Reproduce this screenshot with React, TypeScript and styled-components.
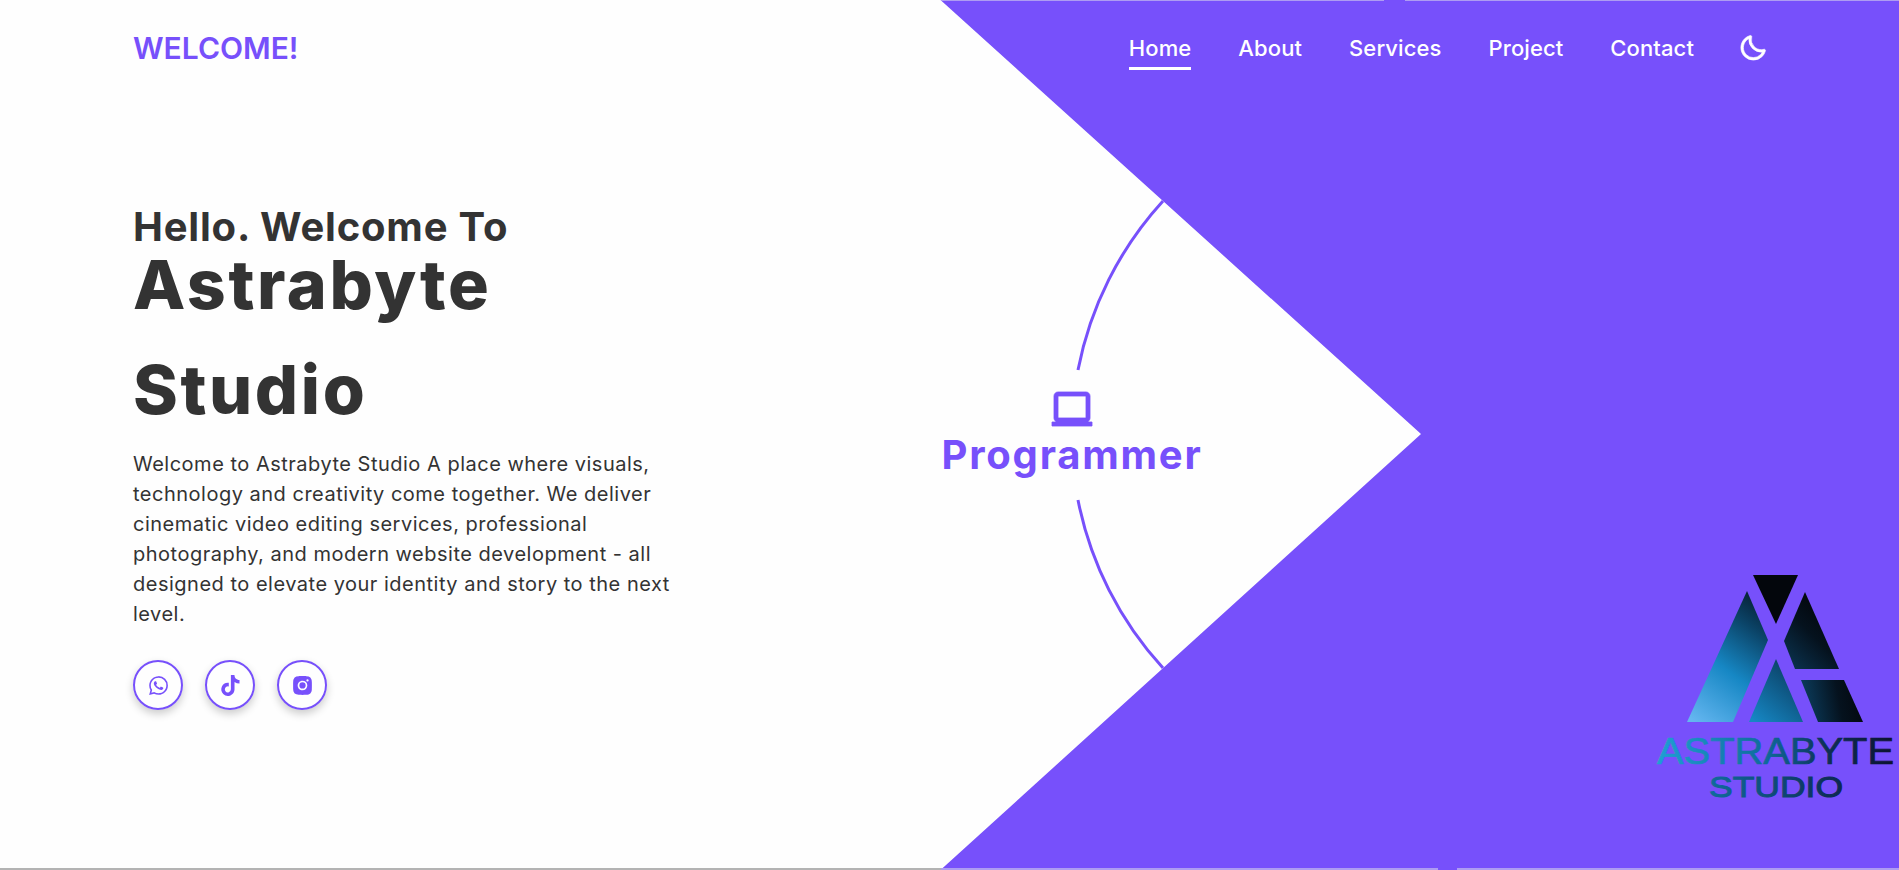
import styled, { createGlobalStyle } from 'styled-components';
import { BiLaptop, BiLogoInstagramAlt, BiLogoTiktok, BiLogoWhatsapp, BiMoon } from 'react-icons/bi';

const PURPLE = '#7750fb';
const TEXT = '#333333';

const NAV_ITEMS = ['Home', 'About', 'Services', 'Project', 'Contact'];

const GlobalStyle = createGlobalStyle`
    * {
        box-sizing: border-box;
    }

    body {
        margin: 0;
        font-family: Inter, 'Noto Sans', sans-serif;
        color: ${TEXT};
        background: #fefefe;
    }
`;

const App = () => {
    return (
        <Page>
            <GlobalStyle />
            <Shape />
            <Ring viewBox="0 0 1899 870">
                <path d="M1163 201 A348 348 0 0 0 1078 370" />
                <path d="M1078 500 A348 348 0 0 0 1163 668" />
            </Ring>

            <Header>
                <Brand>WELCOME!</Brand>
                <Nav>
                    {NAV_ITEMS.map((item) => (
                        <NavLink key={item} active={item === 'Home'}>
                            {item}
                        </NavLink>
                    ))}
                    <Moon />
                </Nav>
            </Header>

            <Hero>
                <Intro>
                    <Greeting>Hello. Welcome To</Greeting>
                    <Title>
                        Astrabyte
                        <br />
                        Studio
                    </Title>
                    <Description>
                        Welcome to Astrabyte Studio A place where visuals, technology and creativity come together. We
                        deliver cinematic video editing services, professional photography, and modern website
                        development - all designed to elevate your identity and story to the next level.
                    </Description>
                    <Socials>
                        <Social>
                            <BiLogoWhatsapp />
                        </Social>
                        <Social>
                            <BiLogoTiktok />
                        </Social>
                        <Social>
                            <BiLogoInstagramAlt />
                        </Social>
                    </Socials>
                </Intro>
                <Role>
                    <RoleIcon />
                    <RoleName>Programmer</RoleName>
                </Role>
            </Hero>

            <Logo viewBox="1650 565 249 245">
                <defs>
                    <linearGradient id="lightBlue" gradientUnits="userSpaceOnUse" x1="1695" y1="722" x2="1785" y2="600">
                        <stop offset="0" stopColor="#64b6f0" />
                        <stop offset="0.4" stopColor="#1687c4" />
                        <stop offset="0.72" stopColor="#0b4468" />
                        <stop offset="1" stopColor="#04101c" />
                    </linearGradient>
                    <linearGradient id="midBlue" gradientUnits="userSpaceOnUse" x1="1755" y1="722" x2="1800" y2="670">
                        <stop offset="0" stopColor="#1687c4" />
                        <stop offset="1" stopColor="#0a3d60" />
                    </linearGradient>
                    <linearGradient id="darkBlue" gradientUnits="userSpaceOnUse" x1="1785" y1="680" x2="1845" y2="620">
                        <stop offset="0" stopColor="#0c3d5e" />
                        <stop offset="0.6" stopColor="#05121e" />
                        <stop offset="1" stopColor="#020408" />
                    </linearGradient>
                    <linearGradient id="cornerBlue" gradientUnits="userSpaceOnUse" x1="1805" y1="700" x2="1860" y2="690">
                        <stop offset="0" stopColor="#0b3a59" />
                        <stop offset="0.6" stopColor="#05121e" />
                        <stop offset="1" stopColor="#03080f" />
                    </linearGradient>
                    <linearGradient id="wordTop" gradientUnits="userSpaceOnUse" x1="1657" y1="750" x2="1894" y2="750">
                        <stop offset="0" stopColor="#1f9fd4" />
                        <stop offset="0.45" stopColor="#0f6c9c" />
                        <stop offset="0.72" stopColor="#0d2f55" />
                        <stop offset="1" stopColor="#0c1230" />
                    </linearGradient>
                    <linearGradient id="wordBottom" gradientUnits="userSpaceOnUse" x1="1709" y1="786" x2="1843" y2="786">
                        <stop offset="0" stopColor="#0f6c9c" />
                        <stop offset="1" stopColor="#0c2750" />
                    </linearGradient>
                </defs>
                <polygon points="1753,575 1798,575 1776,624" fill="#03060c" />
                <polygon points="1747,591 1768,640 1733,722 1687,722" fill="url(#lightBlue)" />
                <polygon points="1805,592 1839,669 1795,669 1784,641" fill="url(#darkBlue)" />
                <polygon points="1776,659 1803,722 1749,722" fill="url(#midBlue)" />
                <polygon points="1801,680 1844,680 1863,722 1818,722" fill="url(#cornerBlue)" />
                <LogoWord
                    x="1657"
                    y="764"
                    fontSize="36"
                    fontWeight="400"
                    stroke="url(#wordTop)"
                    strokeWidth="0.7"
                    textLength="237"
                    lengthAdjust="spacingAndGlyphs"
                    fill="url(#wordTop)"
                >
                    ASTRABYTE
                </LogoWord>
                <LogoWord
                    x="1709"
                    y="797"
                    fontSize="30"
                    fontWeight="400"
                    stroke="url(#wordBottom)"
                    strokeWidth="1"
                    textLength="134"
                    lengthAdjust="spacingAndGlyphs"
                    fill="url(#wordBottom)"
                >
                    STUDIO
                </LogoWord>
            </Logo>

            <TopEdge>
                <EdgeLine width="443px" />
                <EdgeGap width="21px" />
                <EdgeLine width="494px" />
            </TopEdge>
            <BottomEdge>
                <EdgeGrey />
                <EdgeLine width="497px" />
                <EdgeGap width="19px" />
                <EdgeLine width="442px" />
            </BottomEdge>
        </Page>
    );
};

export default App;

const Page = styled.div`
    position: relative;
    display: flex;
    flex-direction: column;
    width: 100%;
    height: 100vh;
    overflow: hidden;
    background: #fefefe;
`;

const Shape = styled.div`
    position: absolute;
    inset: 0;
    background: ${PURPLE};
    clip-path: polygon(940.5px 0, 100% 0, 100% 100%, 940.5px 100%, 1421px 434px);
`;

const Ring = styled.svg`
    position: absolute;
    inset: 0;
    width: 100%;
    height: 100%;
    fill: none;
    stroke: ${PURPLE};
    stroke-width: 3;
`;

const Header = styled.header`
    position: relative;
    display: flex;
    flex: 0 0 96px;
    align-items: center;
    justify-content: space-between;
    padding: 0 131px 0 133px;
`;

const Brand = styled.div`
    font-size: 30px;
    font-weight: 600;
    color: ${PURPLE};
`;

const Nav = styled.nav`
    display: flex;
    align-items: center;
    gap: 47px;
`;

const NavLink = styled.a<{ active?: boolean }>`
    position: relative;
    padding: 8px 0;
    font-size: 22px;
    font-weight: 500;
    letter-spacing: 0.1px;
    color: #fff;

    &::after {
        content: '';
        position: absolute;
        left: 0;
        right: 0;
        bottom: -1px;
        height: 3px;
        background: #fff;
        display: ${({ active }) => (active ? 'block' : 'none')};
    }
`;

const Moon = styled(BiMoon)`
    width: 30px;
    height: 30px;
    margin-left: -3px;
    color: #fff;
    stroke-width: 0.5;
`;

const Hero = styled.main`
    position: relative;
    display: grid;
    flex: 1;
    grid-template-columns: 809px 260px;
    align-items: start;
    padding-left: 133px;
`;

const Intro = styled.div`
    display: flex;
    flex-direction: column;
    align-items: flex-start;
    padding-top: 109px;
`;

const Greeting = styled.h2`
    margin: 0;
    font-size: 40px;
    line-height: 44px;
    font-weight: 700;
    letter-spacing: 0.8px;
`;

const Title = styled.h1`
    margin: -17px 0 0;
    font-size: 68px;
    line-height: 105px;
    font-weight: 800;
    letter-spacing: 2.6px;
`;

const Description = styled.p`
    width: 545px;
    margin: 7px 0 0;
    font-size: 20px;
    line-height: 30px;
    letter-spacing: 0.5px;
`;

const Socials = styled.div`
    display: flex;
    gap: 22px;
    margin-top: 31px;
`;

const Social = styled.a`
    display: flex;
    align-items: center;
    justify-content: center;
    width: 50px;
    height: 50px;
    border: 2px solid ${PURPLE};
    border-radius: 50%;
    font-size: 25px;
    color: ${PURPLE};
    box-shadow: 0 4px 8px rgba(0, 0, 0, 0.2);
`;

const Role = styled.div`
    display: flex;
    flex-direction: column;
    align-items: center;
    margin-top: 290px;
    color: ${PURPLE};
`;

const RoleIcon = styled(BiLaptop)`
    width: 48px;
    height: 48px;
    stroke-width: 0.4;
`;

const RoleName = styled.div`
    margin-top: -2px;
    font-size: 40px;
    line-height: 46px;
    font-weight: 700;
    letter-spacing: 1.8px;
    white-space: nowrap;
`;

const Logo = styled.svg`
    position: absolute;
    left: 1650px;
    top: 565px;
    width: 249px;
    height: 245px;
`;

const LogoWord = styled.text`
    font-family: 'Liberation Sans', sans-serif;
`;

const TopEdge = styled.div`
    position: absolute;
    top: 0;
    left: 941px;
    right: 0;
    display: flex;
    height: 1px;
`;

const BottomEdge = styled.div`
    position: absolute;
    bottom: 0;
    left: 0;
    right: 0;
    display: flex;
    height: 2px;
`;

const EdgeGrey = styled.div`
    width: 941px;
    background: #b3b3b3;
`;

const EdgeLine = styled.div<{ width: string }>`
    width: ${({ width }) => width};
    background: #ae9cf2;
`;

const EdgeGap = styled.div<{ width: string }>`
    width: ${({ width }) => width};
`;
